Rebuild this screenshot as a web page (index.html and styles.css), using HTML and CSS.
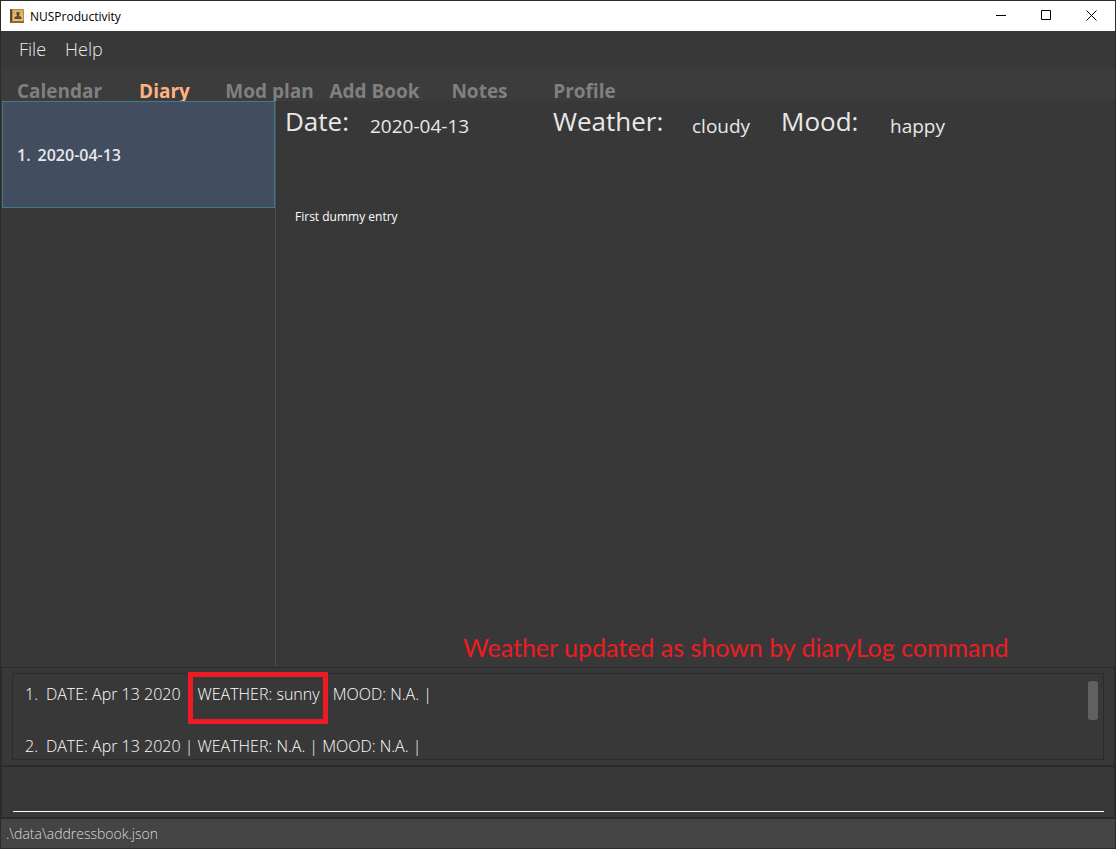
FILE: index.html
```html
<!DOCTYPE html>
<html lang="en">
<head>
<meta charset="utf-8">
<title>NUSProductivity</title>
<link rel="stylesheet" href="styles.css">
</head>
<body>
<div class="window">
  <header class="titlebar">
    <svg class="app-icon" viewBox="0 0 14 14" aria-hidden="true">
      <rect width="14" height="14" rx="1" fill="#b98a48"/>
      <rect x="3" y="1" width="10" height="5" fill="#dcb068"/>
      <rect x="3" y="6" width="10" height="6" fill="#e9bd6c"/>
      <rect width="2" height="14" rx="1" fill="#55483c"/>
      <rect x="1" y="12" width="13" height="2" fill="#8f693a"/>
      <path d="M6.500 3h3v2.500L9 7l2.500 1v2h-7V8L7 7l-.5-1.500z" fill="#5b4a35"/>
    </svg>
    <h1 class="title">NUSProductivity</h1>
    <div class="window-controls">
      <button class="control" type="button" aria-label="Minimize"><svg viewBox="0 0 11 11" aria-hidden="true"><path d="M0 5.500h10"/></svg></button>
      <button class="control" type="button" aria-label="Maximize"><svg viewBox="0 0 11 11" aria-hidden="true"><path d="M.5.500h9v9h-9z"/></svg></button>
      <button class="control" type="button" aria-label="Close"><svg viewBox="0 0 11 11" aria-hidden="true"><path d="M.5.500l10 10M10.500.500l-10 10"/></svg></button>
    </div>
  </header>

  <nav class="menubar">
    <button class="menu" type="button">File</button>
    <button class="menu" type="button">Help</button>
  </nav>

  <div class="tabs" role="tablist">
    <button class="tab" type="button" role="tab">Calendar</button>
    <button class="tab tab-active" type="button" role="tab" aria-selected="true">Diary</button>
    <button class="tab" type="button" role="tab">Mod plan</button>
    <button class="tab" type="button" role="tab">Add Book</button>
    <button class="tab" type="button" role="tab">Notes</button>
    <button class="tab" type="button" role="tab">Profile</button>
  </div>

  <main class="diary">
    <aside class="entries">
      <button class="entry" type="button"><span>1.</span><span>2020-04-13</span></button>
    </aside>
    <article class="detail">
      <dl class="facts">
        <dt>Date:</dt><dd>2020-04-13</dd>
        <dt>Weather:</dt><dd>cloudy</dd>
        <dt>Mood:</dt><dd>happy</dd>
      </dl>
      <p class="entry-text">First dummy entry</p>
      <p class="note">Weather updated as shown by diaryLog command</p>
    </article>
  </main>

  <section class="result">
    <div class="log">
      <div class="log-lines">
        <p class="log-line"><span>1.</span><span>DATE: Apr 13 2020 | <mark class="highlight">WEATHER: sunny</mark> MOOD: N.A. |</span></p>
        <p class="log-line"><span>2.</span><span>DATE: Apr 13 2020 | WEATHER: N.A. | MOOD: N.A. |</span></p>
      </div>
      <div class="scroll-thumb"></div>
    </div>
  </section>

  <div class="command">
    <input class="command-input" type="text" aria-label="Command">
  </div>

  <footer class="status">.\data\addressbook.json</footer>
</div>
</body>
</html>
```
FILE: styles.css
```css
* { box-sizing: border-box; }

body {
  margin: 0;
  background: #383838;
  color: #e8e8e8;
  font-family: "Open Sans", "Noto Sans", sans-serif;
}

button {
  margin: 0;
  padding: 0;
  border: 0;
  background: none;
  color: inherit;
  font: inherit;
}

h1, p, dl, dd { margin: 0; }

.window {
  display: flex;
  flex-direction: column;
  min-height: 100vh;
  border: 1px solid #2b2b2b;
}

.titlebar {
  display: flex;
  align-items: center;
  height: 30px;
  padding: 0 1px 0 9px;
  background: #fff;
  color: #000;
}

.app-icon {
  width: 14px;
  height: 14px;
  margin-right: 6px;
}

.title {
  font-size: 12px;
  font-weight: 400;
}

.window-controls {
  display: flex;
  align-self: stretch;
  margin-left: auto;
}

.control {
  display: flex;
  align-items: center;
  justify-content: center;
  width: 45px;
  padding-bottom: 2px;
}

.control svg {
  width: 11px;
  height: 11px;
  fill: none;
  stroke: #000;
}

.menubar {
  display: flex;
  align-items: center;
  gap: 19px;
  height: 37px;
  padding: 0 0 2px 18px;
  font-size: 18px;
  font-weight: 300;
}

.tabs {
  display: flex;
  padding: 13px 0 0 6px;
  overflow: hidden;
  background: #3c3c3c;
}

.tab {
  width: 105px;
  color: #808080;
  font-size: 19px;
  font-weight: 700;
  line-height: 20px;
  white-space: nowrap;
}

.tab-active { color: #ffb380; }

.diary {
  display: flex;
  flex: 1;
}

.entries {
  width: 275px;
  padding-left: 1px;
  border-right: 1px solid #4d4d4d;
}

.entry {
  display: flex;
  align-items: center;
  gap: 7px;
  width: 100%;
  height: 107px;
  padding-left: 14px;
  border: 1px solid #3e7b91;
  background: #424d5f;
  font-size: 16px;
  font-weight: 600;
}

.detail {
  display: flex;
  flex: 1;
  flex-direction: column;
}

.facts {
  display: grid;
  grid-template-columns: 85px 183px 139px 89px 109px 1fr;
  align-items: center;
  height: 41px;
  padding-left: 9px;
}

.facts dt {
  padding-bottom: 2px;
  font-size: 26px;
}

.facts dd {
  padding-top: 9px;
  font-size: 19px;
}

.entry-text {
  padding: 66px 0 0 19px;
  color: #fff;
  font-size: 12px;
}

.note {
  margin-top: auto;
  padding: 0 0 5px 187px;
  color: #ed1c24;
  font-family: Lato, sans-serif;
  font-size: 25px;
}

.result {
  padding: 5px 10px;
  border: 1px solid #2b2b2b;
  border-bottom-width: 2px;
}

.log {
  display: flex;
  justify-content: space-between;
  height: 87px;
  padding: 7px 5px 0 12px;
  border: 1px solid #2b2b2b;
}

.log-lines {
  display: grid;
  align-content: start;
  gap: 26px;
  color: #fff;
  font-size: 16px;
  font-weight: 300;
  line-height: 26px;
}

.log-line {
  display: flex;
  gap: 8px;
  white-space: nowrap;
}

.highlight {
  position: relative;
  margin-right: 9px;
  background: none;
  color: inherit;
}

.highlight::after {
  content: "";
  position: absolute;
  inset: -11px -8px -19px -10px;
  border: 5px solid #ed1c24;
}

.scroll-thumb {
  width: 10px;
  height: 39px;
  border-radius: 3px;
  background: #606060;
}

.command {
  padding: 8px 10px 5px 11px;
  border: 1px solid #2b2b2b;
  border-top: 0;
  border-bottom-width: 2px;
}

.command-input {
  display: block;
  width: 100%;
  height: 37px;
  padding: 0;
  border: 0;
  border-bottom: 1px solid #fff;
  outline: 0;
  background: none;
  color: #fff;
  font: 300 16px "Open Sans", sans-serif;
}

.status {
  padding: 0 5px;
  background: #444;
  color: #d8d8d8;
  font-size: 14px;
  font-weight: 300;
  line-height: 29px;
}
```
